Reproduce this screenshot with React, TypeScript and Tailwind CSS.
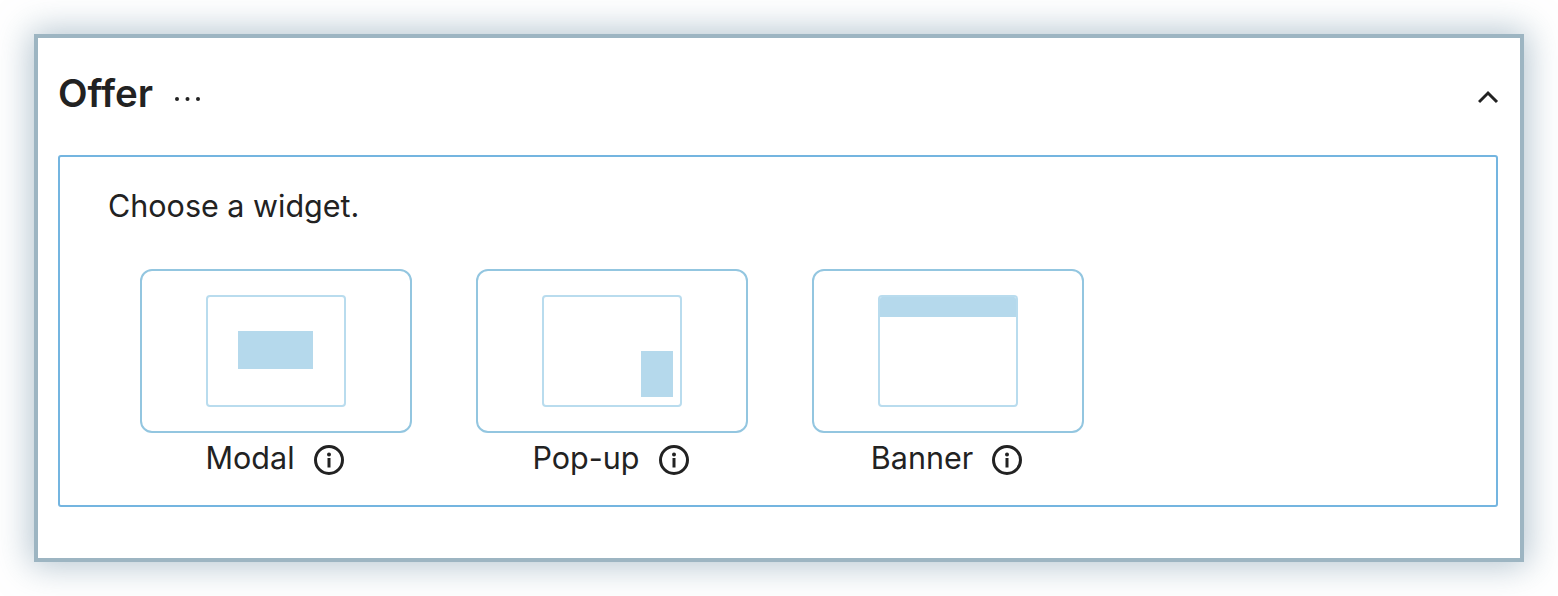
const widgets = ["Modal", "Pop-up", "Banner"];

function InfoIcon() {
  return (
    <svg width="32" height="32" viewBox="0 0 32 32" fill="none" className="shrink-0">
      <circle cx="16" cy="16" r="13.5" stroke="#222222" strokeWidth="3" />
      <circle cx="16" cy="10.5" r="2" fill="#222222" />
      <rect x="14.5" y="14" width="3" height="9.5" fill="#222222" />
    </svg>
  );
}

function Preview({ name }: { name: string }) {
  return (
    <div className="flex h-[164px] w-[272px] items-center justify-center rounded-[12px] border-2 border-[#93c6e0] bg-white">
      <div className="relative h-[112px] w-[140px] overflow-hidden rounded-[4px] border-2 border-[#b9dcee]">
        {name === "Modal" && (
          <div className="ml-[30px] mt-[34px] h-[38px] w-[75px] bg-[#b5d9ec]" />
        )}
        {name === "Pop-up" && (
          <div className="ml-[97px] mt-[54px] h-[46px] w-[32px] bg-[#b5d9ec]" />
        )}
        {name === "Banner" && <div className="h-[20px] w-full bg-[#b5d9ec]" />}
      </div>
    </div>
  );
}

export default function App() {
  return (
    <div className="h-[596px] overflow-hidden bg-white px-[34px] pt-[34px] font-['Inter',sans-serif] text-[#222222]">
      <div className="h-[528px] w-[1490px] border-4 border-[#9db5c2] bg-white px-[20px] shadow-[0_0_32px_4px_rgba(120,150,170,0.55)]">
        <div className="flex h-[117px] items-center justify-between pb-[7px]">
          <div className="flex items-center">
            <h2 className="text-[38.5px] font-semibold leading-none">Offer</h2>
            <svg width="28" height="6" viewBox="0 0 28 6" className="ml-[21px] mt-[11px]">
              <circle cx="3" cy="3" r="2" fill="#222222" />
              <circle cx="13.5" cy="3" r="2" fill="#222222" />
              <circle cx="24" cy="3" r="2" fill="#222222" />
            </svg>
          </div>
          <svg width="22" height="14" viewBox="0 0 22 14" fill="none" className="mt-[8px]">
            <path d="M1 12 L10 3 L19 12" stroke="#222222" strokeWidth="3" />
          </svg>
        </div>
        <div className="h-[352px] w-[1440px] rounded-[3px] border-2 border-[#74b5e0] pl-[48px] pt-[31px]">
          <p className="text-[30.5px] leading-[36px]">Choose a widget.</p>
          <div className="ml-[32px] mt-[45px] flex gap-[64px]">
            {widgets.map((name) => (
              <div key={name} className="w-[272px]">
                <Preview name={name} />
                <div className="mt-[5px] flex h-[40px] items-center justify-center pr-[2px]">
                  <span className="text-[30.5px] leading-[36px]">{name}</span>
                  <span className="ml-[18px] mt-[4px]">
                    <InfoIcon />
                  </span>
                </div>
              </div>
            ))}
          </div>
        </div>
      </div>
    </div>
  );
}
